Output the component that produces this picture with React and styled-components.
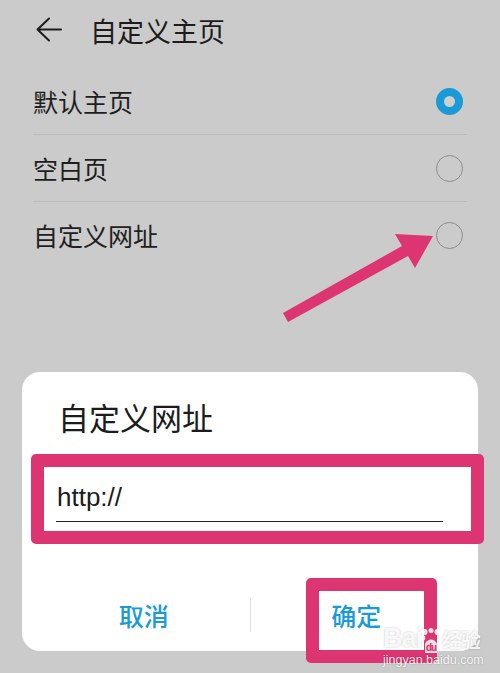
import React from 'react';
import styled, { createGlobalStyle } from 'styled-components';

const GlobalStyle = createGlobalStyle`
  body {
    margin: 0;
    background: #cbcbcb;
    font-family: "Noto Sans CJK SC", "Noto Sans", sans-serif;
  }
`;

const PINK = '#dd3572';
const BLUE = '#1a9bd7';

const Page = styled.div`
  position: relative;
  width: 500px;
  height: 673px;
  overflow: hidden;
  background: #cbcbcb;
`;

const Header = styled.header`
  display: flex;
  align-items: center;
  gap: 28px;
  height: 60px;
  padding-left: 36px;
`;

const Title = styled.h1`
  margin: 0;
  font-size: 27px;
  font-weight: 400;
  color: #1c1c1c;
`;

const OptionList = styled.ul`
  list-style: none;
  margin: 8px 33px 0 33px;
  padding: 0;
`;

const OptionRow = styled.li`
  display: flex;
  align-items: center;
  justify-content: space-between;
  height: 66px;
  padding-right: 4px;
  border-bottom: ${p => (p.$last ? 'none' : '1px solid #bababa')};
  font-size: 25px;
  color: #1e1e1e;
`;

const Radio = styled.span`
  box-sizing: border-box;
  width: 27px;
  height: 27px;
  border-radius: 50%;
  border: ${p => (p.$checked ? `8px solid ${BLUE}` : '1.5px solid #8c8c8c')};
  background: ${p => (p.$checked ? '#cfcfcf' : 'transparent')};
`;

const Dialog = styled.section`
  margin: 104px 22px 0 22px;
  background: #fff;
  border-radius: 18px;
  padding-top: 27px;
`;

const DialogTitle = styled.h2`
  margin: 0 0 0 36px;
  font-size: 31px;
  line-height: 36px;
  font-weight: 400;
  color: #1c1c1c;
`;

const FieldFrame = styled.div`
  margin: 19px -6px 0 9px;
  border: 13px solid ${PINK};
  border-radius: 5px;
  background: #fff;
  height: 64px;
  padding: 0 28px 0 12px;
  display: flex;
  align-items: flex-start;
`;

const UrlInput = styled.input`
  flex: 1;
  min-width: 0;
  border: none;
  border-bottom: 1.5px solid #222;
  outline: none;
  background: transparent;
  height: 55px;
  box-sizing: border-box;
  padding: 7px 0 0 1px;
  font-family: "Liberation Sans", Arial, sans-serif;
  font-size: 26px;
  color: #1c1c1c;
`;

const ButtonRow = styled.div`
  display: flex;
  align-items: center;
  height: 73px;
  margin-top: 34px;
  padding: 0 16px;
`;

const Cell = styled.div`
  position: relative;
  flex: 1;
  height: 100%;
  display: flex;
  align-items: center;
  justify-content: center;
`;

const TextButton = styled.button`
  border: none;
  background: none;
  padding: 0;
  font-family: inherit;
  font-size: 25px;
  font-weight: 500;
  color: ${BLUE};
  position: relative;
  z-index: 1;
`;

const Separator = styled.span`
  width: 1px;
  height: 34px;
  background: #e2e2e2;
`;

const HighlightBox = styled.span`
  position: absolute;
  left: 55px;
  top: 0;
  width: 131px;
  height: 85px;
  box-sizing: border-box;
  border: 13px solid ${PINK};
  border-radius: 5px;
`;

const ArrowLayer = styled.svg`
  position: absolute;
  left: 0;
  top: 0;
  pointer-events: none;
`;

const Watermark = styled.div`
  position: absolute;
  left: 383px;
  top: 624px;
  display: flex;
  flex-direction: column;
  align-items: flex-start;
  color: rgba(255, 255, 255, 0.88);
  text-shadow: 0 0 2px rgba(0, 0, 0, 0.25);
  pointer-events: none;
`;

const MarkLogo = styled.div`
  display: flex;
  align-items: flex-end;
  font-family: "Liberation Sans", Arial, sans-serif;
  font-size: 27px;
  font-weight: 700;
  line-height: 28px;
  letter-spacing: -1px;
`;

const MarkCjk = styled.span`
  font-family: "Noto Sans CJK SC", sans-serif;
  font-size: 20px;
  line-height: 24px;
  margin-left: 2px;
`;

const MarkUrl = styled.span`
  font-family: "Liberation Sans", Arial, sans-serif;
  font-size: 12.5px;
  line-height: 16px;
`;

const Paw = () => (
  <svg width="22" height="26" viewBox="0 0 22 26" style={{ margin: '0 -2px -2px -2px' }}>
    <g fill="rgba(255,255,255,0.85)">
      <ellipse cx="5" cy="4" rx="2.5" ry="3" />
      <ellipse cx="11" cy="2.5" rx="2.5" ry="2.5" />
      <ellipse cx="17" cy="4" rx="2.5" ry="3" />
      <ellipse cx="3" cy="10" rx="2.3" ry="2.8" />
      <path d="M5 16 C7 10 15 10 17 16 L17 25 L5 25 Z" />
    </g>
    <text x="11" y="23" textAnchor="middle" fontSize="10" fontWeight="700" fill="#dd3572" fontFamily="Liberation Sans, Arial, sans-serif">du</text>
  </svg>
);

const BackIcon = () => (
  <svg width="26" height="26" viewBox="0 0 26 26" fill="none" stroke="#1c1c1c" strokeWidth="2" strokeLinecap="round" strokeLinejoin="round">
    <path d="M25 12.5H1.5M13 1.5L1.5 12.5L13 23.5" />
  </svg>
);

const options = [
  { label: '默认主页', checked: true },
  { label: '空白页' },
  { label: '自定义网址', last: true },
];

export default function App() {
  return (
    <Page>
      <GlobalStyle />
      <Header>
        <BackIcon />
        <Title>自定义主页</Title>
      </Header>

      <OptionList>
        {options.map(o => (
          <OptionRow key={o.label} $last={o.last}>
            {o.label}
            <Radio $checked={o.checked} />
          </OptionRow>
        ))}
      </OptionList>

      <Dialog>
        <DialogTitle>自定义网址</DialogTitle>
        <FieldFrame>
          <UrlInput defaultValue="http://" />
        </FieldFrame>
        <ButtonRow>
          <Cell>
            <TextButton>取消</TextButton>
          </Cell>
          <Separator />
          <Cell>
            <TextButton>确定</TextButton>
            <HighlightBox />
          </Cell>
        </ButtonRow>
      </Dialog>

      <ArrowLayer width="500" height="673" viewBox="0 0 500 673">
        <polygon
          fill={PINK}
          points="283,313 402,246 395,234 433,236 415,268 408,256 288,322"
        />
      </ArrowLayer>

      <Watermark>
        <MarkLogo>
          Bai
          <Paw />
          <MarkCjk>经验</MarkCjk>
        </MarkLogo>
        <MarkUrl>jingyan.baidu.com</MarkUrl>
      </Watermark>
    </Page>
  );
}
